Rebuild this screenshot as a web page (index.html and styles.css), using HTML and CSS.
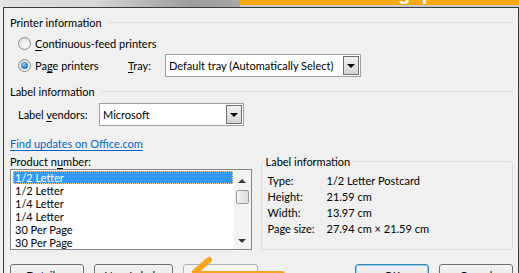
FILE: index.html
```html
<!DOCTYPE html>
<html lang="en">
<head>
    <meta charset="UTF-8">
    <title>Label Options</title>
    <link rel="stylesheet" href="styles.css">
</head>
<body>

<div class="titlebar">
    <div class="glass"></div>
    <div class="banner"><span class="banner-text">g p</span></div>
</div>

<div class="dialog">
    <!-- Printer information -->
    <div class="group-head"><span>Printer information</span><i class="rule"></i></div>
    <div class="radio-row first">
        <span class="radio"></span>
        <span><u>C</u>ontinuous-feed printers</span>
    </div>
    <div class="radio-row">
        <span class="radio-label">
            <span class="radio checked"></span>
            <span>Pa<u>g</u>e printers</span>
        </span>
        <span class="tray-label"><u>T</u>ray:</span>
        <div class="combo tray">
            <span class="combo-text">Default tray (Automatically Select)</span>
            <span class="combo-btn"><i class="caret"></i></span>
        </div>
    </div>

    <!-- Label information -->
    <div class="group-head second"><span>Label information</span><i class="rule"></i></div>
    <div class="vendor-row">
        <span class="vendor-label">Label <u>v</u>endors:</span>
        <div class="combo vendor">
            <span class="combo-text">Microsoft</span>
            <span class="combo-btn"><i class="caret"></i></span>
        </div>
    </div>
    <a class="link" href="#">Find updates on Office.com</a>

    <div class="lower">
        <div class="product">
            <div class="caption">Product n<u>u</u>mber:</div>
            <div class="listbox">
                <div class="items">
                    <div class="item selected">1/2 Letter</div>
                    <div class="item">1/2 Letter</div>
                    <div class="item">1/4 Letter</div>
                    <div class="item">1/4 Letter</div>
                    <div class="item">30 Per Page</div>
                    <div class="item">30 Per Page</div>
                </div>
                <div class="scrollbar">
                    <i class="arrow-up"></i>
                    <span class="thumb"></span>
                    <i class="arrow-down"></i>
                </div>
            </div>
        </div>
        <fieldset class="info">
            <legend>Label information</legend>
            <div class="info-row"><span class="key">Type:</span><span>1/2 Letter Postcard</span></div>
            <div class="info-row"><span class="key">Height:</span><span>21.59 cm</span></div>
            <div class="info-row"><span class="key">Width:</span><span>13.97 cm</span></div>
            <div class="info-row"><span class="key">Page size:</span><span>27.94 cm × 21.59 cm</span></div>
        </fieldset>
    </div>

    <div class="buttons">
        <button class="btn details">Details...</button>
        <button class="btn newlabel">New Label...</button>
        <button class="btn disabled">Delete</button>
        <span class="spacer"></span>
        <button class="btn default">OK</button>
        <button class="btn cancel">Cancel</button>
    </div>
</div>

<!-- annotation arrow drawn over the dialog -->
<svg class="pointer" width="519" height="273" viewBox="0 0 519 273">
    <path d="M209 260 L195 272 M197 274 L282 274" fill="none" stroke="#f6a623" stroke-width="6" stroke-linecap="round"/>
</svg>

</body>
</html>
```

FILE: styles.css
```css
body {
    margin: 0;
    width: 519px;
    height: 273px;
    overflow: hidden;
    position: relative;
    background-color: #f0f0f0;
    font-family: Lato, "Liberation Sans", sans-serif;
    font-size: 11px;
    line-height: 15px;
    color: #000;
}
u {
    text-decoration-thickness: 1px;
    text-underline-offset: 2px;
}
.titlebar {
    display: flex;
    height: 7px;
}
.glass {
    width: 240px;
    background: linear-gradient(to right, #e4e4e4 0%, #d6d6d6 40%, #9c9c9c 80%, #a8a8a8 100%);
}
.banner {
    flex: 1;
    overflow: hidden;
    background: linear-gradient(to bottom, #f7a90b 0, #f7a90b 5px, #c9c9c9 5px, #c9c9c9 7px);
}
.banner-text {
    display: block;
    margin-top: -17px;
    padding-left: 158px;
    font: bold 20px/20px "Liberation Sans", sans-serif;
    color: #fff;
    word-spacing: 6px;
}
.dialog {
    box-sizing: border-box;
    margin-left: 3px;
    height: 266px;
    overflow: hidden;
    border: 1px solid #3a3a3a;
    border-bottom: none;
    padding: 7px 5px 0 6px;
}
.group-head {
    display: flex;
    align-items: center;
    gap: 7px;
    height: 15px;
}
.group-head.second {
    margin-top: 7px;
}
.rule {
    flex: 1;
    height: 1px;
    background-color: #d5dfe5;
}
.radio-row {
    display: flex;
    align-items: center;
    height: 23px;
    padding-left: 8px;
}
.radio-row.first {
    height: 21px;
    margin-top: 3px;
}
.radio-label {
    display: flex;
    align-items: center;
    width: 110px;
}
.radio {
    box-sizing: border-box;
    width: 13px;
    height: 13px;
    margin-right: 4px;
    border: 1px solid #8f8f8f;
    border-radius: 50%;
    background: radial-gradient(circle at 60% 65%, #fbfbfb 0%, #ececec 45%, #cfcfcf 100%);
    position: relative;
}
.radio.checked::after {
    content: "";
    position: absolute;
    left: 2px;
    top: 2px;
    width: 7px;
    height: 7px;
    border-radius: 50%;
    background: radial-gradient(circle at 40% 35%, #a9d3f6 0%, #3f8ad2 45%, #13498c 100%);
}
.tray-label {
    width: 37px;
}
.combo {
    box-sizing: border-box;
    display: flex;
    align-items: center;
    height: 23px;
    background-color: #fff;
    border: 1px solid #a0a0a0;
    padding: 1px;
}
.combo.tray {
    width: 196px;
}
.combo.vendor {
    width: 145px;
}
.combo-text {
    flex: 1;
    padding-left: 2px;
    white-space: nowrap;
    overflow: hidden;
}
.combo-btn {
    box-sizing: border-box;
    display: flex;
    align-items: center;
    justify-content: center;
    width: 16px;
    height: 100%;
    border: 1px solid #707070;
    background: linear-gradient(to bottom, #f2f2f2, #d4d4d4);
}
.caret {
    width: 0;
    height: 0;
    border-left: 4px solid transparent;
    border-right: 4px solid transparent;
    border-top: 4px solid #000;
}
.vendor-row {
    display: flex;
    align-items: center;
    margin-top: 4px;
    padding-left: 8px;
}
.vendor-label {
    width: 81px;
    white-space: nowrap;
}
.link {
    display: block;
    width: max-content;
    margin-top: 10px;
    color: #0066cc;
    text-decoration: underline;
    text-decoration-thickness: 1px;
    text-underline-offset: 2px;
}
.lower {
    display: flex;
    margin-top: 3px;
}
.product {
    width: 243px;
    margin-right: 9px;
}
.caption {
    height: 15px;
}
.listbox {
    box-sizing: border-box;
    display: flex;
    height: 81px;
    border: 1px solid #828790;
    background-color: #fff;
}
.items {
    flex: 1;
    padding: 1px 1px 0 2px;
    overflow: hidden;
}
.item {
    height: 13px;
    line-height: 13px;
    padding-left: 2px;
    white-space: nowrap;
}
.item.selected {
    background-color: #3399ff;
    color: #fff;
    outline: 1px dotted #f5d6a0;
    outline-offset: -1px;
}
.scrollbar {
    width: 17px;
    display: flex;
    flex-direction: column;
    align-items: center;
    background-color: #f3f3f3;
}
.arrow-up, .arrow-down {
    width: 0;
    height: 0;
    border-left: 4px solid transparent;
    border-right: 4px solid transparent;
}
.arrow-up {
    margin-top: 9px;
    border-bottom: 4px solid #3a3a3a;
}
.arrow-down {
    margin-top: auto;
    margin-bottom: 6px;
    border-top: 4px solid #3a3a3a;
}
.thumb {
    box-sizing: border-box;
    width: 13px;
    height: 14px;
    margin-top: 7px;
    border: 1px solid #9a9a9a;
    border-radius: 2px;
    background: linear-gradient(to right, #f4f4f4, #dcdcdc);
}
.info {
    box-sizing: border-box;
    width: 254px;
    margin: 0;
    padding: 4px 0 0 6px;
    border: 1px solid #d5dfe5;
    border-radius: 3px;
}
.info legend {
    margin-left: -3px;
    padding: 0 1px;
    line-height: 15px;
}
.info-row {
    display: flex;
    height: 16px;
    line-height: 16px;
}
.key {
    width: 59px;
}
.buttons {
    display: flex;
    gap: 10px;
    margin-top: 14px;
}
.btn {
    box-sizing: border-box;
    height: 23px;
    padding: 0;
    font: inherit;
    color: #000;
    border: 1px solid #707070;
    border-radius: 3px;
    background: linear-gradient(to bottom, #f2f2f2 0%, #ebebeb 50%, #dddddd 50%, #cfcfcf 100%);
}
.btn.details {
    width: 74px;
}
.btn.newlabel {
    width: 79px;
}
.btn.disabled {
    width: 75px;
    color: #a0a0a0;
    border-color: #adb2b5;
    background: #f4f4f4;
}
.spacer {
    flex: 1;
}
.btn.default {
    width: 74px;
    border-color: #3c7fb1;
    box-shadow: inset 0 0 0 1px #8fd3f7;
}
.btn.cancel {
    width: 74px;
}
.pointer {
    position: absolute;
    left: 0;
    top: 0;
    pointer-events: none;
}
```
